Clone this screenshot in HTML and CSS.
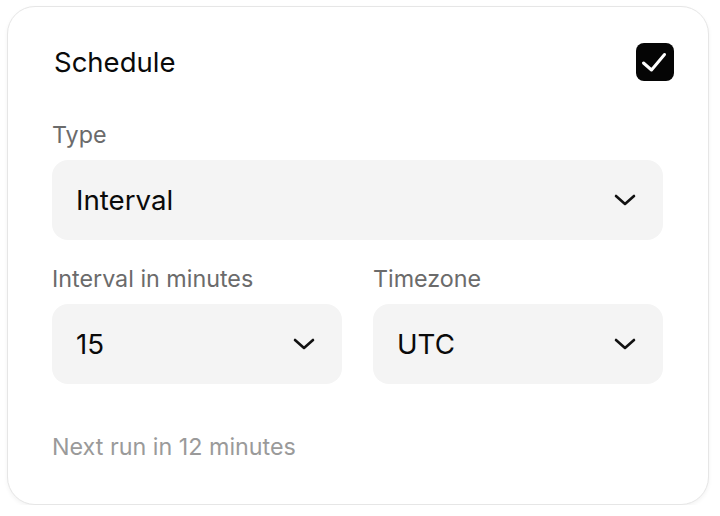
FILE: index.html
```html
<!DOCTYPE html>
<html lang="en">
<head>
<meta charset="utf-8">
<title>Schedule</title>
<link rel="stylesheet" href="styles.css">
</head>
<body>
<div class="card">
  <div class="header">
    <h2 class="title">Schedule</h2>
    <span class="checkbox" role="checkbox" aria-checked="true">
      <svg width="38" height="38" viewBox="0 0 38 38" aria-hidden="true"><path d="M7.5 20 L15.5 27 L28.5 11.5" fill="none" stroke="#fff" stroke-width="3" stroke-linecap="round" stroke-linejoin="round"/></svg>
    </span>
  </div>
  <div class="body">
    <div class="field">
      <div class="label">Type</div>
      <div class="select"><span class="value">Interval</span>
        <svg class="chev" width="22" height="12" viewBox="0 0 22 12"><path d="M2 2 L11 10 L20 2" fill="none" stroke="#111" stroke-width="2.6" stroke-linecap="round" stroke-linejoin="round"/></svg>
      </div>
    </div>
    <div class="row">
      <div class="field">
        <div class="label">Interval in minutes</div>
        <div class="select"><span class="value">15</span>
          <svg class="chev" width="22" height="12" viewBox="0 0 22 12"><path d="M2 2 L11 10 L20 2" fill="none" stroke="#111" stroke-width="2.6" stroke-linecap="round" stroke-linejoin="round"/></svg>
        </div>
      </div>
      <div class="field">
        <div class="label">Timezone</div>
        <div class="select"><span class="value">UTC</span>
          <svg class="chev" width="22" height="12" viewBox="0 0 22 12"><path d="M2 2 L11 10 L20 2" fill="none" stroke="#111" stroke-width="2.6" stroke-linecap="round" stroke-linejoin="round"/></svg>
        </div>
      </div>
    </div>
    <div class="note">Next run in 12 minutes</div>
  </div>
</div>
</body>
</html>
```
FILE: styles.css
```css
html, body {
  margin: 0;
  padding: 0;
  background: #ffffff;
}
body {
  padding: 6px 0 0 7px;
  font-family: Inter, "Noto Sans", sans-serif;
  color: #111;
}
.card {
  box-sizing: border-box;
  width: 702px;
  height: 499px;
  border: 1px solid #e6e6e6;
  border-radius: 28px;
  background: #fff;
  box-shadow: 0 2px 4px rgba(0,0,0,0.05);
}
.header {
  display: flex;
  align-items: center;
  justify-content: space-between;
  padding: 36px 34px 0 46px;
}
.title {
  margin: 0;
  font-size: 27.5px;
  font-weight: 400;
  line-height: 32px;
  color: #0a0a0a;
}
.checkbox {
  display: flex;
  width: 38px;
  height: 38px;
  border-radius: 8px;
  background: #050505;
}
.body {
  padding: 40px 45px 0 44px;
}
.field {
  display: flex;
  flex-direction: column;
  gap: 11px;
}
.label {
  font-size: 23.3px;
  line-height: 28px;
  color: #6b6b6b;
}
.select {
  display: flex;
  align-items: center;
  justify-content: space-between;
  height: 80px;
  padding: 0 27px 0 24px;
  border-radius: 16px;
  background: #f4f4f4;
  box-sizing: border-box;
}
.value {
  font-size: 27.7px;
  color: #0a0a0a;
}
.chev {
  display: block;
}
.row {
  display: grid;
  grid-template-columns: 1fr 1fr;
  gap: 31px;
  margin-top: 25px;
}
.note {
  margin-top: 49px;
  font-size: 23.3px;
  line-height: 28px;
  color: #9a9a9a;
}
```
